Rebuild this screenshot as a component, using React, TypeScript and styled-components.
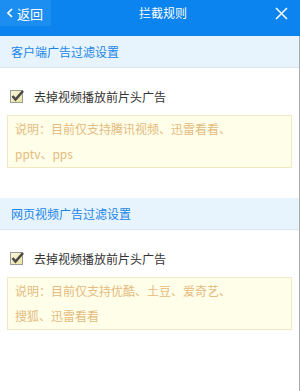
import React from "react";
import styled, { createGlobalStyle } from "styled-components";

const GlobalStyle = createGlobalStyle`
  html, body {
    margin: 0;
    padding: 0;
    background: #ffffff;
  }
  body {
    font-family: "Microsoft YaHei", "Noto Sans CJK SC", "Noto Sans", sans-serif;
  }
`;

const Page = styled.div`
  width: 300px;
  height: 391px;
  display: flex;
  flex-direction: column;
  overflow: hidden;
`;

const Header = styled.div`
  display: flex;
  align-items: flex-start;
  height: 36px;
  flex-shrink: 0;
  background: #0b84ef;
  color: #ffffff;
`;

const BackButton = styled.div`
  display: flex;
  align-items: center;
  gap: 4px;
  width: 51px;
  height: 26px;
  padding-left: 7px;
  box-sizing: border-box;
  background: #1c8ef1;
  font-size: 13px;
  cursor: pointer;
`;

const Title = styled.div`
  flex: 1;
  height: 26px;
  line-height: 26px;
  text-align: center;
  font-size: 12px;
`;

const CloseButton = styled.div`
  width: 19px;
  height: 26px;
  display: flex;
  align-items: center;
  padding-right: 6px;
  cursor: pointer;
`;

const Body = styled.div`
  flex: 1;
  border-right: 1px solid #a9a9a9;
`;

const Section = styled.div`
  margin-bottom: 30px;
`;

const SectionHeader = styled.div`
  height: 31px;
  line-height: 31px;
  padding-left: 11px;
  background: #e7f3fd;
  border-bottom: 1px solid #d9e7f3;
  color: #1a86e8;
  font-size: 12px;
`;

const SectionBody = styled.div`
  padding: 0 7px;
`;

const CheckRow = styled.label`
  display: flex;
  align-items: center;
  gap: 10px;
  height: 16px;
  margin-top: 20px;
  padding-left: 3px;
  color: #333333;
  font-size: 12px;
`;

const Note = styled.div`
  margin-top: 11px;
  padding: 0 7px 1px;
  background: #fffee8;
  border: 1px solid #f2e9c4;
  color: #e4bb80;
  font-size: 12px;
  line-height: 25px;
`;

const CheckIcon = () => (
  <svg width="14" height="14" viewBox="0 0 14 14">
    <defs>
      <linearGradient id="cbfill" x1="0" y1="0" x2="1" y2="1">
        <stop offset="0" stopColor="#f9f6d8" />
        <stop offset="1" stopColor="#ece39e" />
      </linearGradient>
    </defs>
    <rect x="0.5" y="1.5" width="12" height="12" fill="url(#cbfill)" stroke="#9a9a9a" />
    <path d="M2.5 7 L5.5 10.5 L13 2" fill="none" stroke="#4a4a4a" strokeWidth="2.6" />
  </svg>
);

const sections = [
  {
    title: "客户端广告过滤设置",
    lines: ["说明：目前仅支持腾讯视频、迅雷看看、", "pptv、pps"],
  },
  {
    title: "网页视频广告过滤设置",
    lines: ["说明：目前仅支持优酷、土豆、爱奇艺、", "搜狐、迅雷看看"],
  },
];

export default function App() {
  return (
    <>
      <GlobalStyle />
      <Page>
        <Header>
          <BackButton>
            <svg width="6" height="10" viewBox="0 0 6 10">
              <path d="M5 1 L1 5 L5 9" fill="none" stroke="#fff" strokeWidth="1.6" />
            </svg>
            <span>返回</span>
          </BackButton>
          <Title>拦截规则</Title>
          <CloseButton>
            <svg width="13" height="13" viewBox="0 0 13 13">
              <path d="M1 1 L12 12 M12 1 L1 12" stroke="#fff" strokeWidth="1.5" />
            </svg>
          </CloseButton>
        </Header>
        <Body>
          {sections.map((s, i) => (
            <Section key={i}>
              <SectionHeader>{s.title}</SectionHeader>
              <SectionBody>
                <CheckRow>
                  <CheckIcon />
                  <span>去掉视频播放前片头广告</span>
                </CheckRow>
                <Note>
                  {s.lines[0]}
                  <br />
                  {s.lines[1]}
                </Note>
              </SectionBody>
            </Section>
          ))}
        </Body>
      </Page>
    </>
  );
}
